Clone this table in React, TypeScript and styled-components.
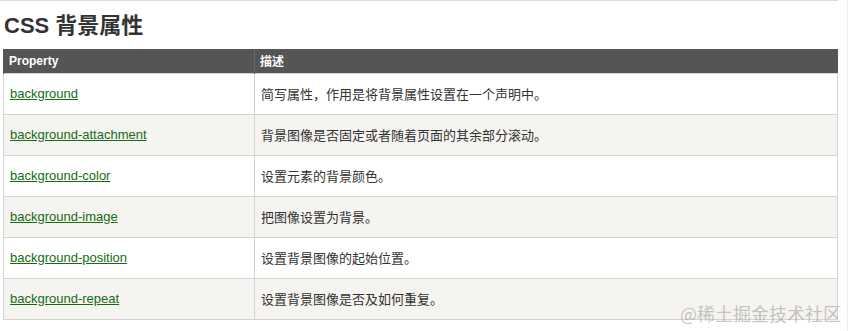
import React from "react";
import styled, { createGlobalStyle } from "styled-components";

const Global = createGlobalStyle`
  html, body { margin: 0; padding: 0; background: #ffffff; }
  body { font-family: "Liberation Sans", Arial, "Noto Sans CJK SC", sans-serif; color: #333; }
`;

const Shell = styled.div`
  position: relative;
  width: 848px;
  height: 331px;
  border-right: 1px solid #ececec;
  box-sizing: border-box;
  overflow: hidden;
`;

const Page = styled.div`
  width: 838px;
  border-top: 1px solid #dadada;
`;

const Title = styled.h2`
  margin: 0 0 9px 0;
  padding: 11px 0 0 4px;
  font-size: 22px;
  line-height: 28px;
  font-weight: bold;
  color: #333333;
  font-family: "Liberation Sans", Arial, "Noto Sans CJK SC", sans-serif;
`;

const Table = styled.table`
  margin-left: 3px;
  width: 835px;
  border-collapse: collapse;
  table-layout: fixed;
  font-size: 13px;
`;

const HeadCell = styled.th<{ $w?: number }>`
  background: #555555;
  color: #ffffff;
  font-size: 12px;
  font-weight: bold;
  text-align: left;
  height: 24px;
  padding: 0 5px;
  box-sizing: border-box;
  ${(p) => (p.$w ? `width: ${p.$w}px;` : "")}
  border-left: 1px solid #666666;
  &:first-child { border-left: 1px solid #555555; }
`;

const Row = styled.tr<{ $alt: boolean }>`
  background: ${(p) => (p.$alt ? "#f6f4f0" : "#ffffff")};
`;

const Cell = styled.td`
  border: 1px solid #d4d4d4;
  height: 41px;
  padding: 0 6px;
  box-sizing: border-box;
  vertical-align: middle;
  color: #333333;
  font-size: 13px;
`;

const PropLink = styled.a`
  color: #146c14;
  text-decoration: underline;
  font-size: 13px;
`;

const Watermark = styled.div`
  position: absolute;
  right: 6px;
  bottom: 5px;
  font-size: 18px;
  color: rgba(150, 150, 150, 0.55);
  font-family: "Noto Sans CJK SC", sans-serif;
  pointer-events: none;
`;

const rows: [string, string][] = [
  ["background", "简写属性，作用是将背景属性设置在一个声明中。"],
  ["background-attachment", "背景图像是否固定或者随着页面的其余部分滚动。"],
  ["background-color", "设置元素的背景颜色。"],
  ["background-image", "把图像设置为背景。"],
  ["background-position", "设置背景图像的起始位置。"],
  ["background-repeat", "设置背景图像是否及如何重复。"],
];

export default function App() {
  return (
    <>
      <Global />
      <Shell>
        <Page>
          <Title>CSS 背景属性</Title>
          <Table>
            <thead>
              <tr>
                <HeadCell $w={251}>Property</HeadCell>
                <HeadCell>描述</HeadCell>
              </tr>
            </thead>
            <tbody>
              {rows.map(([p, d], i) => (
                <Row key={p} $alt={i % 2 === 1}>
                  <Cell>
                    <PropLink href="#">{p}</PropLink>
                  </Cell>
                  <Cell>{d}</Cell>
                </Row>
              ))}
            </tbody>
          </Table>
        </Page>
        <Watermark>@稀土掘金技术社区</Watermark>
      </Shell>
    </>
  );
}
